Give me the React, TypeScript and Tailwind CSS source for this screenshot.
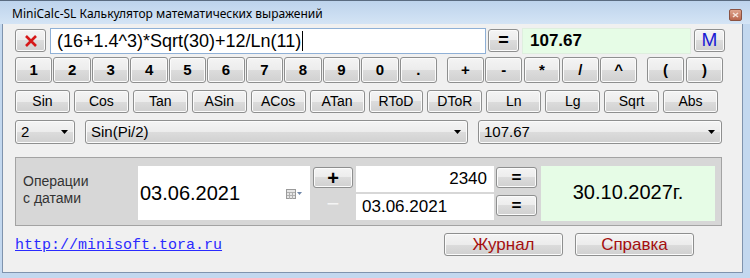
import React from "react";

const btn =
  "flex items-center justify-center border border-[#8e8f8f] rounded-[3px] bg-[linear-gradient(#f4f4f4_0%,#ececec_50%,#dcdcdc_50%,#d0d0d0_100%)] shadow-[inset_0_0_0_1px_#fbfbfb]";

const combo =
  "flex items-center justify-between border border-[#8e8f8f] rounded-[3px] bg-[linear-gradient(#f4f4f4_0%,#ececec_50%,#dcdcdc_50%,#d0d0d0_100%)] shadow-[inset_0_0_0_1px_#fbfbfb] text-black text-[15px] pl-[5px] pr-[6px]";

const Arrow = () => (
  <svg width="7" height="4" viewBox="0 0 7 4">
    <path d="M0 0h7L3.5 4z" fill="#000" />
  </svg>
);

const digits = ["1", "2", "3", "4", "5", "6", "7", "8", "9", "0", "."];
const ops = ["+", "-", "*", "/", "^"];
const funcs = ["Sin", "Cos", "Tan", "ASin", "ACos", "ATan", "RToD", "DToR", "Ln", "Lg", "Sqrt", "Abs"];

export default function App() {
  return (
    <div className="w-[750px] h-[278px] flex flex-col bg-[#c3d8ef] border-t border-[#5a6b80] font-['Liberation_Sans',Arial,sans-serif] overflow-hidden">
      {/* Title bar */}
      <div className="h-[23px] flex items-center justify-between pl-[12px] pr-[8px] bg-[linear-gradient(#bdd3ec,#d4e4f5)]">
        <span className="text-[12px] text-black font-['Noto_Sans',sans-serif] pt-[2px]">
          MiniCalc-SL Калькулятор математических выражений
        </span>
        <div className="w-[13px] h-[12px] mt-[4px] rounded-[2px] border border-[#8a5242] bg-[linear-gradient(#e0a58e,#b9664d)] flex items-center justify-center">
          <svg width="7" height="6" viewBox="0 0 7 6">
            <path d="M1 1l5 4M6 1l-5 4" stroke="#f6e2d8" strokeWidth="1.6" />
          </svg>
        </div>
      </div>

      {/* Client area */}
      <div className="ml-[2px] w-[741px] h-[249px] bg-[#f0f0f0] border-x border-b border-[#7f93ad] pl-[12px] pt-[4px] flex flex-col">
        {/* Row 1: expression */}
        <div className="flex items-start h-[26px]">
          <button className={`${btn} w-[31px] h-[23px] mt-[1px]`}>
            <svg width="14" height="12" viewBox="0 0 14 12">
              <path d="M2 1l10 10M12 1L2 11" stroke="#d61818" strokeWidth="2.6" />
            </svg>
          </button>
          <div className="ml-[4px] w-[436px] h-[26px] bg-white border border-[#8fb0d6] flex items-center pl-[6px] text-[18px] text-black">
            (16+1.4^3)*Sqrt(30)+12/Ln(11)
            <span className="inline-block w-px h-[20px] bg-black ml-[1px]" />
          </div>
          <button className={`${btn} ml-[2px] w-[31px] h-[23px] mt-[1px] text-[18px] font-bold text-black`}>=</button>
          <div className="ml-[3px] w-[169px] h-[26px] bg-[#e6fce6] border border-[#dfeedf] flex items-center pl-[7px] text-[17px] font-bold text-black">
            107.67
          </div>
          <button className={`${btn} ml-[3px] w-[31px] h-[23px] mt-[1px] text-[19px] text-[#1a1ad4]`}>M</button>
        </div>

        {/* Row 2: digits & operators */}
        <div className="flex h-[26px] mt-[3px]">
          <div className="grid grid-cols-11 gap-px w-[422px]">
            {digits.map((d) => (
              <button key={d} className={`${btn} text-[15px] font-bold text-black`}>{d}</button>
            ))}
          </div>
          <div className="grid grid-cols-5 gap-[1.5px] w-[190px] ml-[10px]">
            {ops.map((o) => (
              <button key={o} className={`${btn} text-[15px] font-bold text-black`}>{o}</button>
            ))}
          </div>
          <div className="grid grid-cols-2 gap-[2px] w-[76px] ml-[10px]">
            <button className={`${btn} text-[15px] font-bold text-black`}>(</button>
            <button className={`${btn} text-[15px] font-bold text-black`}>)</button>
          </div>
        </div>

        {/* Row 3: functions */}
        <div className="grid grid-cols-12 gap-[4px] w-[703px] h-[23px] mt-[7px]">
          {funcs.map((f) => (
            <button key={f} className={`${btn} text-[14px] text-black`}>{f}</button>
          ))}
        </div>

        {/* Row 4: combos */}
        <div className="flex h-[24px] mt-[7px]">
          <div className={`${combo} w-[60px]`}>
            <span>2</span>
            <Arrow />
          </div>
          <div className={`${combo} w-[383px] ml-[10px]`}>
            <span>Sin(Pi/2)</span>
            <Arrow />
          </div>
          <div className={`${combo} w-[244px] ml-[10px]`}>
            <span>107.67</span>
            <Arrow />
          </div>
        </div>

        {/* Date operations */}
        <div className="flex w-[707px] h-[69px] mt-[13px] bg-[#d7d7d7] border border-[#a3a3a3]">
          <div className="w-[122px] flex items-center pl-[7px] text-[14px] leading-[17px] text-[#333] pb-[3px]">
            Операции
            <br />с датами
          </div>
          <div className="w-[172px] h-[54px] mt-[8px] bg-white flex items-center justify-between pl-[2px] pr-[8px]">
            <span className="text-[20px] text-black">03.06.2021</span>
            <svg width="16" height="10" viewBox="0 0 16 10" className="mt-[2px]">
              <rect x="0.5" y="0.5" width="9" height="9" fill="#e6e6e6" stroke="#9a9a9a" />
              <path d="M1 3.5h8M1 6.5h8M3.5 3v7M6.5 3v7" stroke="#b0b0b0" />
              <path d="M11 3h5l-2.5 3z" fill="#6f86a8" />
            </svg>
          </div>
          <div className="w-[40px] ml-[3px] flex flex-col">
            <button className={`${btn} h-[21px] mt-[9px] text-[20px] font-bold text-black`}>+</button>
            <div className="h-[30px] flex items-center justify-center text-[22px] text-[#f4f4f4]">−</div>
          </div>
          <div className="w-[138px] ml-[3px] flex flex-col">
            <div className="h-[26px] mt-[8px] bg-white flex items-center justify-end pr-[7px] text-[17px] text-black">
              2340
            </div>
            <div className="h-[26px] mt-[2px] bg-white flex items-center pl-[6px] text-[17px] text-black">
              03.06.2021
            </div>
          </div>
          <div className="w-[41px] ml-[2px] flex flex-col">
            <button className={`${btn} h-[21px] mt-[9px] text-[17px] font-bold text-black`}>=</button>
            <button className={`${btn} h-[21px] mt-[7px] text-[17px] font-bold text-black`}>=</button>
          </div>
          <div className="w-[174px] h-[55px] ml-[4px] mt-[8px] bg-[#e6fce6] flex items-center justify-center text-[20px] text-black pb-[4px]">
            30.10.2027г.
          </div>
        </div>

        {/* Footer */}
        <div className="flex h-[23px] mt-[7px]">
          <div className="w-[429px] flex items-center pt-[3px]">
            <a href="#" className="font-['Liberation_Mono',monospace] text-[15px] text-[#2a2aff] underline">
              http://minisoft.tora.ru
            </a>
          </div>
          <button className={`${btn} w-[119px] text-[17px] text-[#a50f0f]`}>Журнал</button>
          <button className={`${btn} w-[119px] ml-[12px] text-[17px] text-[#a50f0f]`}>Справка</button>
        </div>
      </div>
    </div>
  );
}
